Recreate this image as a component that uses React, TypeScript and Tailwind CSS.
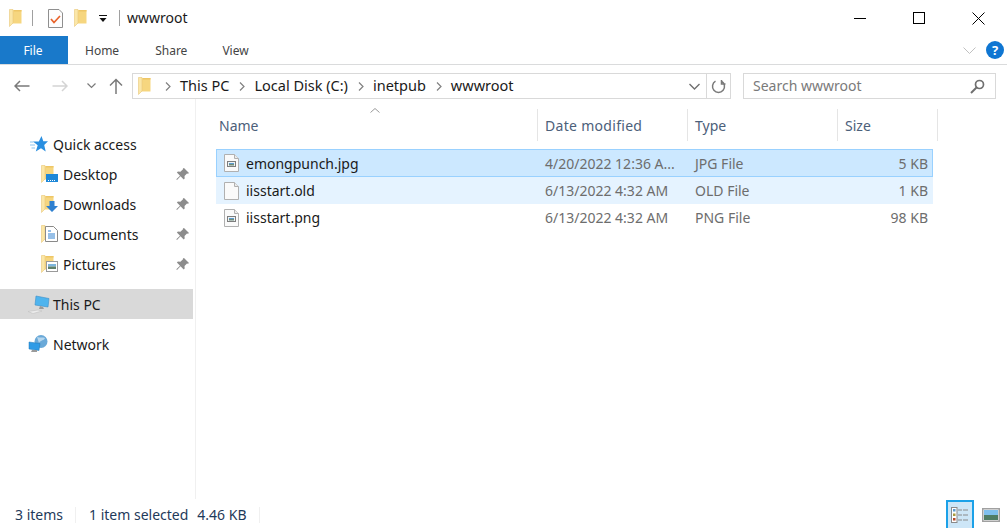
const font = { fontFamily: '"Noto Sans", "Open Sans", sans-serif' };

const Folder = ({ className = "" }: { className?: string }) => (
  <svg className={className} width="13" height="18" viewBox="0 0 13 18">
    <path d="M3 1h9.500v13.500H3z" fill="#f6d67f" />
    <path d="M5 1h7.500v1.500H5z" fill="#eec666" />
    <path d="M.5.500L4 .5v13.500L.5 17.500z" fill="#fbe7a8" stroke="#e9c878" strokeWidth="0.600" />
  </svg>
);

const Pin = () => (
  <svg width="15" height="15" viewBox="0 0 15 15">
    <path d="M9 1l5 5-1 .8-1-.3-2.500 2.500.2 2.500-1 1L5.500 9.300 2 13l-.7-.7L5 8.700 1.900 5.500l1-1 2.500.3L8 2.200 7.900 1.500z" fill="#8c8c8c" />
  </svg>
);

const FileIcon = ({ image = false }: { image?: boolean }) => (
  <svg width="15" height="18" viewBox="0 0 15 18">
    <path d="M.5.500h10l4 4v13H.5z" fill="#fafafa" stroke="#b0b0b0" />
    <path d="M10.500.5v4h4" fill="#ececec" stroke="#b0b0b0" />
    {image && (
      <>
        <rect x="3.500" y="7.500" width="8" height="5" fill="#eef3f6" stroke="#7d7d7d" />
        <rect x="5" y="9" width="5" height="1" fill="#5b9bd0" />
        <rect x="5" y="10" width="5" height="1.500" fill="#6f8c78" />
      </>
    )}
  </svg>
);

const navBadges: Record<string, React.ReactNode> = {
  Desktop: (
    <svg className="absolute left-[5px] top-[7px]" width="12" height="10" viewBox="0 0 12 10">
      <rect x="0" y="2" width="12" height="8" fill="#1e88d8" />
      <path d="M2 8.500h8" stroke="#ffffff" strokeDasharray="1 1" />
    </svg>
  ),
  Downloads: (
    <svg className="absolute left-[5px] top-[5px]" width="12" height="12" viewBox="0 0 12 12">
      <path d="M3.500 1h5v5H12l-6 6-6-6h3.500z" fill="#2f80d0" />
    </svg>
  ),
  Documents: (
    <svg className="absolute left-[4px] top-[1px]" width="13" height="16" viewBox="0 0 13 16">
      <path d="M.5.500h8l4 4v11H.5z" fill="#ffffff" stroke="#8a8a8a" />
      <path d="M3 5h3M3 8h7M3 10h7M3 12h7" stroke="#2f80d0" />
    </svg>
  ),
  Pictures: (
    <svg className="absolute left-[5px] top-[6px]" width="12" height="11" viewBox="0 0 12 11">
      <rect x=".5" y=".5" width="11" height="10" fill="#ffffff" stroke="#9a9a9a" />
      <rect x="2" y="3" width="8" height="2.500" fill="#7db5dc" />
      <rect x="2" y="5.500" width="8" height="2.500" fill="#5f7f68" />
    </svg>
  ),
};

const QuickFolder = ({ name }: { name: string }) => (
  <div className="flex h-[30px] items-center pl-[41px]">
    <div className="relative h-[18px] w-[17px] shrink-0">
      <Folder />
      {navBadges[name]}
    </div>
    <span className="ml-[5px] text-[14px] text-[#1a1a1a]">{name}</span>
    <span className="ml-auto mr-[3px]">
      <Pin />
    </span>
  </div>
);

const rows = [
  { name: "emongpunch.jpg", date: "4/20/2022 12:36 A...", type: "JPG File", size: "5 KB", image: true, cls: "bg-[#cce8ff] border border-[#99d1ff] h-[28px]" },
  { name: "iisstart.old", date: "6/13/2022 4:32 AM", type: "OLD File", size: "1 KB", image: false, cls: "bg-[#e5f3ff] h-[27px] border-x border-transparent" },
  { name: "iisstart.png", date: "6/13/2022 4:32 AM", type: "PNG File", size: "98 KB", image: true, cls: "h-[27px] border-x border-transparent" },
];

export default function App() {
  return (
    <div className="flex h-[528px] w-[1007px] flex-col overflow-hidden bg-white" style={font}>
      {/* title bar */}
      <div className="flex h-[36px] shrink-0 items-center">
        <div className="ml-[9px]"><Folder /></div>
        <div className="ml-[10px] h-[16px] w-px bg-[#a0a0a0]" />
        <svg className="ml-[15px]" width="15" height="19" viewBox="0 0 15 19">
          <path d="M.5.500h10.500l3.500 3.500v14.500H.5z" fill="#fdfdfd" stroke="#8f8f8f" />
          <path d="M3 10l3 3.500L12 7" fill="none" stroke="#e8622a" strokeWidth="1.700" />
        </svg>
        <div className="ml-[11px]"><Folder /></div>
        <svg className="ml-[12px]" width="8" height="9" viewBox="0 0 8 9">
          <path d="M0 1.500h8" stroke="#111111" />
          <path d="M.5 4h7L4 8z" fill="#111111" />
        </svg>
        <div className="ml-[12px] h-[16px] w-px bg-[#a0a0a0]" />
        <span className="ml-[7px] pb-[2px] text-[14px] text-[#1a1a1a]">wwwroot</span>
        <div className="ml-auto flex">
          <div className="flex h-[36px] w-[46px] items-center justify-center">
            <div className="h-px w-[12px] bg-black" />
          </div>
          <div className="ml-[13px] flex h-[36px] w-[46px] items-center justify-center">
            <div className="h-[12px] w-[12px] border border-black" />
          </div>
          <div className="ml-[13px] mr-[6px] flex h-[36px] w-[46px] items-center justify-center">
            <svg width="13" height="13" viewBox="0 0 13 13">
              <path d="M.5.500l12 12M12.500.500l-12 12" stroke="#000000" />
            </svg>
          </div>
        </div>
      </div>

      {/* ribbon tabs */}
      <div className="flex h-[29px] shrink-0 items-start border-b border-[#dadbdc]">
        <div className="flex h-[28px] w-[68px] items-center justify-center bg-[#1979ca] pb-0 pr-[2px] pt-[2px] text-[12px] text-white">File</div>
        <span className="ml-[17px] flex h-[28px] items-center pt-[2px] text-[12px] text-[#444444]">Home</span>
        <span className="ml-[36px] flex h-[28px] items-center pt-[2px] text-[12px] text-[#444444]">Share</span>
        <span className="ml-[35px] flex h-[28px] items-center pt-[2px] text-[12px] text-[#444444]">View</span>
        <div className="ml-auto mr-[3px] flex h-[28px] items-center gap-[10px]">
          <svg width="13" height="7" viewBox="0 0 13 7">
            <path d="M.5.500l6 6 6-6" fill="none" stroke="#c0c0c0" />
          </svg>
          <div className="flex h-[18px] w-[18px] items-center justify-center rounded-full bg-[#0f76d2] text-[13px] font-bold leading-none text-white">?</div>
        </div>
      </div>

      {/* address row */}
      <div className="flex h-[34px] shrink-0 items-end">
        <div className="flex h-[26px] w-[132px] shrink-0 items-center">
          <svg className="ml-[14px]" width="16" height="12" viewBox="0 0 16 12">
            <path d="M15.500 6H1M6 1L1 6l5 5" fill="none" stroke="#7a7a7a" strokeWidth="1.500" />
          </svg>
          <svg className="ml-[22px]" width="16" height="12" viewBox="0 0 16 12">
            <path d="M.5 6H15M10 1l5 5-5 5" fill="none" stroke="#d4d4d4" strokeWidth="1.500" />
          </svg>
          <svg className="ml-[19px]" width="9" height="6" viewBox="0 0 9 6">
            <path d="M.5.500l4 4 4-4" fill="none" stroke="#7a7a7a" strokeWidth="1.200" />
          </svg>
          <svg className="ml-[13px]" width="14" height="16" viewBox="0 0 14 16">
            <path d="M7 16V1.500M1 7.500l6-6 6 6" fill="none" stroke="#7a7a7a" strokeWidth="1.500" />
          </svg>
        </div>
        <div className="flex h-[26px] w-[599px] shrink-0 items-center border border-[#d9d9d9] text-[14.500px] text-[#1a1a1a]">
          <div className="ml-[5px] mr-[4px]"><Folder /></div>
          {["This PC", "Local Disk (C:)", "inetpub", "wwwroot"].map((crumb) => (
            <div key={crumb} className="flex items-center">
              <svg className="ml-[10px] mr-[9px]" width="6" height="9" viewBox="0 0 6 9">
                <path d="M1 .5l4 4-4 4" fill="none" stroke="#808080" strokeWidth="1.200" />
              </svg>
              <span className="pb-px">{crumb}</span>
            </div>
          ))}
          <svg className="ml-auto mr-[6px]" width="11" height="7" viewBox="0 0 11 7">
            <path d="M.5 1l5 5 5-5" fill="none" stroke="#707070" strokeWidth="1.400" />
          </svg>
          <div className="flex h-full w-[24px] items-center justify-center border-l border-[#d9d9d9]">
            <svg width="15" height="15" viewBox="0 0 15 15">
              <path d="M10.500 2.200A6 6 0 1 1 4.500 2.200M10.500 1v4h4" fill="none" stroke="#7a7a7a" strokeWidth="1.500" />
            </svg>
          </div>
        </div>
        <div className="ml-[12px] flex h-[26px] w-[253px] shrink-0 items-center border border-[#d9d9d9] pl-[9px] text-[14px] text-[#7a7a7a]">
          <span className="pb-[2px]">Search wwwroot</span>
          <svg className="ml-auto mr-[10px]" width="15" height="15" viewBox="0 0 15 15">
            <circle cx="9.500" cy="5.500" r="4" fill="none" stroke="#6f6f6f" strokeWidth="1.700" />
            <path d="M6.500 8.500L1 14" stroke="#6f6f6f" strokeWidth="2" />
          </svg>
        </div>
      </div>

      {/* main */}
      <div className="flex min-h-0 flex-1">
        <div className="w-[196px] shrink-0 border-r border-[#f0f0f0] pt-[30px]">
          <div className="w-[193px]">
            <div className="flex h-[30px] items-center pl-[30px]">
              <svg width="18" height="17" viewBox="0 0 18 17">
                <path d="M11.500 0l1.800 5.300H18l-3.800 3.600 1.500 6.600-4.700-3.300-5.200 3.300 1.900-6.200L3 5.500l5.800-.1z" fill="#2a8fe0" />
                <path d="M0 6h3.500M0 9h5M1.500 12h3.500" stroke="#8cc4ee" />
              </svg>
              <span className="ml-[5px] text-[14px] text-[#1a1a1a]">Quick access</span>
            </div>
            {["Desktop", "Downloads", "Documents", "Pictures"].map((n) => (
              <QuickFolder key={n} name={n} />
            ))}
            <div className="mt-[10px] flex h-[30px] items-center bg-[#d9d9d9] pl-[28px]">
              <svg width="22" height="19" viewBox="0 0 22 19">
                <path d="M8 1l13 2.500-1 8.500-13-2z" fill="#4fb4ee" stroke="#3c8fc8" strokeWidth="0.600" />
                <path d="M12 11l-1 3h5l-1-2z" fill="#9a9a9a" />
                <path d="M0 16.500l10-1.500 4 1-9 2.500z" fill="#ececec" stroke="#bdbdbd" strokeWidth="0.500" />
              </svg>
              <span className="ml-[3px] text-[14px] text-[#1a1a1a]">This PC</span>
            </div>
            <div className="mt-[10px] flex h-[30px] items-center pl-[28px]">
              <svg width="20" height="18" viewBox="0 0 20 18">
                <circle cx="13" cy="6.500" r="6.500" fill="#6aa9d8" />
                <path d="M9 2c3 1 6 0 8 1-1 3-5 2-6 5z" fill="#b7d7ee" />
                <path d="M1 7l11 1.500-1 7L1 14z" fill="#2f9be6" stroke="#1f78b8" strokeWidth="0.500" />
                <path d="M4 15h5v2H3z" fill="#9a9a9a" />
              </svg>
              <span className="ml-[5px] text-[14px] text-[#1a1a1a]">Network</span>
            </div>
          </div>
        </div>

        {/* file list */}
        <div className="min-w-0 flex-1 pl-[20px] pt-[10px]">
          <div className="relative flex h-[32px] w-[722px] text-[14px] text-[#4c607a]">
            <svg className="absolute left-[154px] top-[-1px]" width="10" height="5" viewBox="0 0 10 5">
              <path d="M.5 4.500l4.500-4 4.500 4" fill="none" stroke="#9a9a9a" />
            </svg>
            <div className="flex w-[322px] items-center border-r border-[#e5e5e5] pl-[3px]">Name</div>
            <div className="flex w-[150px] items-center border-r border-[#e5e5e5] pl-[7px] tracking-[0.3px]">Date modified</div>
            <div className="flex w-[150px] items-center border-r border-[#e5e5e5] pl-[7px]">Type</div>
            <div className="flex w-[100px] items-center border-r border-[#e5e5e5] pl-[7px]">Size</div>
          </div>
          <div className="mt-[8px] w-[717px]">
            {rows.map((r) => (
              <div key={r.name} className={`flex items-center ${r.cls}`}>
                <div className="flex w-[320px] items-center pl-[7px]">
                  <FileIcon image={r.image} />
                  <span className="ml-[7px] text-[14px] text-[#1a1a1a]">{r.name}</span>
                </div>
                <div className="w-[150px] pl-[8px] text-[14px] text-[#6d6d6d]">{r.date}</div>
                <div className="w-[150px] pl-[8px] text-[14px] text-[#6d6d6d]">{r.type}</div>
                <div className="w-[91px] text-right text-[14px] text-[#6d6d6d]">{r.size}</div>
              </div>
            ))}
          </div>
        </div>
      </div>

      {/* status bar */}
      <div className="flex h-[29px] shrink-0 items-center text-[14px] text-[#1f3a5a]">
        <div className="mt-[2px] flex items-center">
          <span className="ml-[15px] w-[60px]">3 items</span>
          <div className="h-[16px] w-px bg-[#f0f0f0]" />
          <span className="ml-[13px]">1 item selected</span>
          <span className="ml-[9px]">4.46 KB</span>
          <div className="ml-[12px] h-[16px] w-px bg-[#f0f0f0]" />
        </div>
        <div className="ml-auto mr-[4px] flex h-[29px] items-end gap-[5px]">
          <div className="flex h-[28px] w-[28px] flex-col items-center justify-center gap-px border-2 border-b-0 border-[#1ba1e8] bg-[#cde6f7]">
            <svg width="18" height="16" viewBox="0 0 18 16">
              <rect x=".5" y=".5" width="5.500" height="15" fill="#ffffff" stroke="#8a8a8a" />
              <rect x="2" y="2" width="2.500" height="2.500" fill="#5b9bd0" />
              <rect x="2" y="6.500" width="2.500" height="2.500" fill="#a89a3c" />
              <rect x="2" y="11" width="2.500" height="2.500" fill="#b5482c" />
              <path d="M7 3h4M12 3h5M7 8h4M12 8h5M7 13h4M12 13h5" stroke="#8a8a8a" />
            </svg>
          </div>
          <div className="mb-[3px] flex h-[20px] w-[24px] items-center justify-center">
            <svg width="18" height="14" viewBox="0 0 18 14">
              <rect x=".75" y=".75" width="16.500" height="12.500" fill="#ffffff" stroke="#a0a0a0" strokeWidth="1.500" />
              <rect x="2" y="2" width="14" height="5" fill="#7fc0ee" />
              <rect x="2" y="7" width="14" height="5" fill="#4f7d66" />
            </svg>
          </div>
        </div>
      </div>
    </div>
  );
}
